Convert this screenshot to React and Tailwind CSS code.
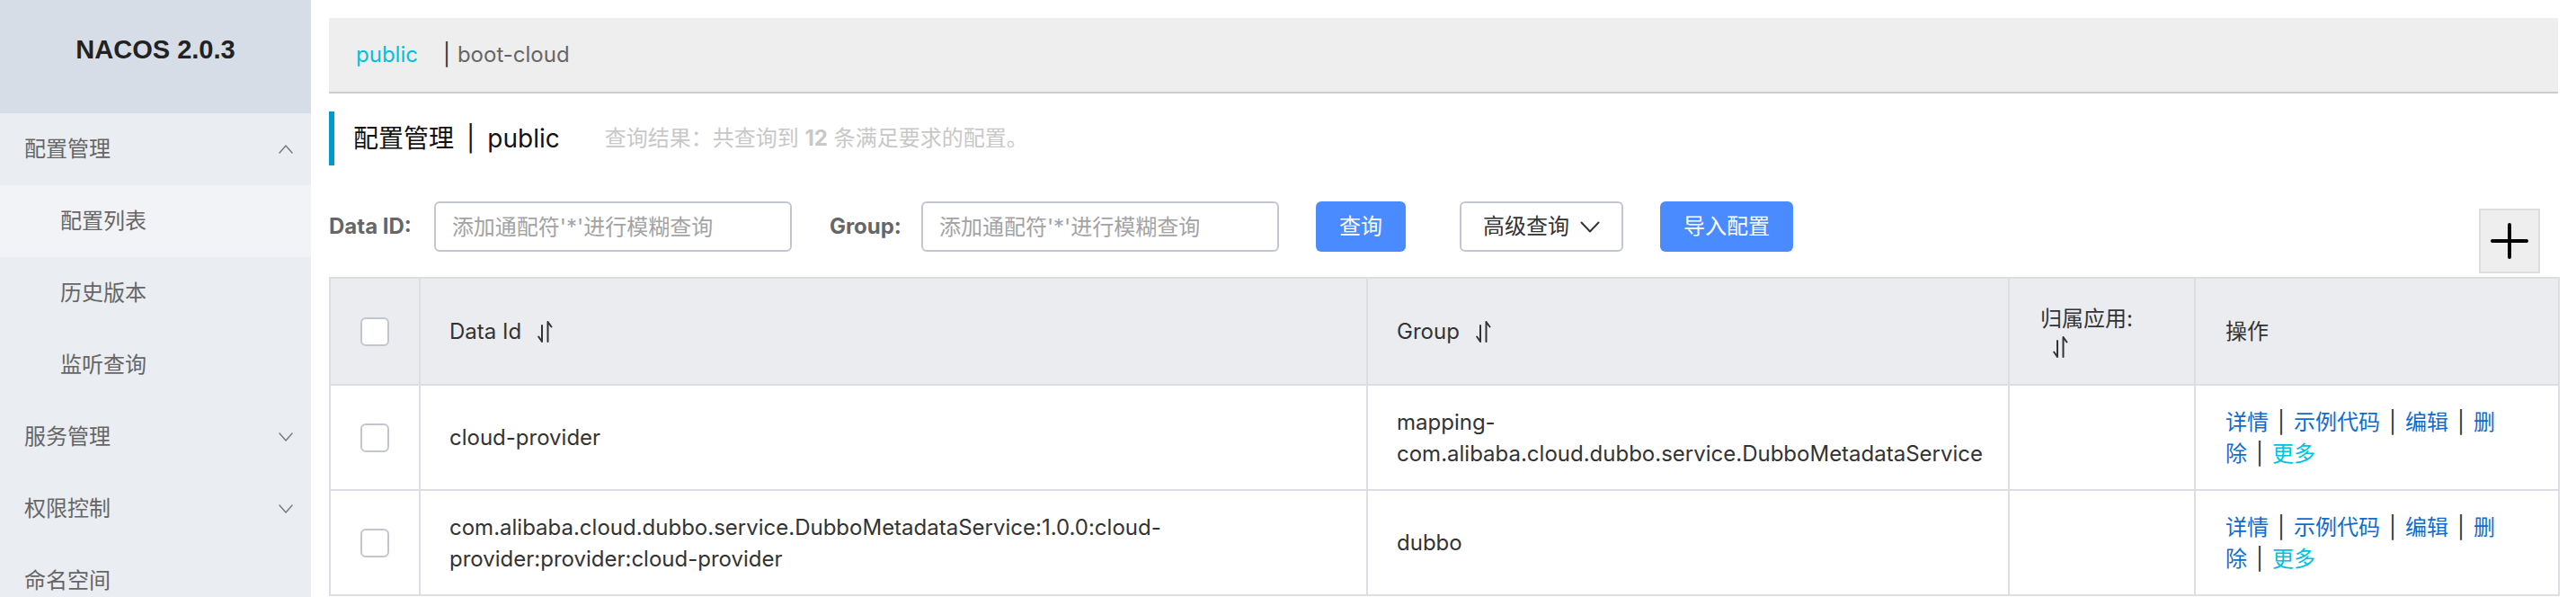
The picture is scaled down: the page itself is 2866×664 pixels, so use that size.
import React from "react";

const SortIcon = ({ className = "" }) => (
    <svg width="17" height="26" viewBox="0 0 17 26" fill="none" stroke="#333" strokeWidth="2" strokeLinecap="round" strokeLinejoin="round" className={className}>
        <path d="M5 6v18M5 24L1.2 18.5" />
        <path d="M11.5 24V2M11.5 2l4 5.5" />
    </svg>
);

const Chevron = ({ up }) => (
    <svg width="16" height="10" viewBox="0 0 16 10" fill="none" stroke="#777" strokeWidth="1.4" strokeLinecap="round" strokeLinejoin="round">
        <path d={up ? "M1 9l7-8 7 8" : "M1 1l7 8 7-8"} />
    </svg>
);

const Checkbox = () => <div className="mx-auto w-[32px] h-[32px] rounded-[6px] border-2 border-[#c4c6cf] bg-white"></div>;

const menu = [
    { label: "配置管理", chevron: "up" },
    { label: "配置列表", sub: true, active: true },
    { label: "历史版本", sub: true },
    { label: "监听查询", sub: true },
    { label: "服务管理", chevron: "down" },
    { label: "权限控制", chevron: "down" },
    { label: "命名空间" },
];

const rows = [
    {
        dataId: "cloud-provider",
        group: "mapping-com.alibaba.cloud.dubbo.service.DubboMetadataService",
    },
    {
        dataId: "com.alibaba.cloud.dubbo.service.DubboMetadataService:1.0.0:cloud-provider:provider:cloud-provider",
        group: "dubbo",
    },
];

function Ops() {
    const sep = <span className="mx-[10px] text-[#333]">|</span>;
    return (
        <div className="w-[305px] leading-[35px]">
            <a className="text-[#0f6bcf]">详情</a>
            {sep}
            <a className="text-[#0f6bcf]">示例代码</a>
            {sep}
            <a className="text-[#0f6bcf]">编辑</a>
            {sep}
            <a className="text-[#0f6bcf]">删除</a>
            {sep}
            <a className="text-[#00c1de]">更多</a>
        </div>
    );
}

export default function App() {
    return (
        <div className="flex w-[2866px] h-[664px] overflow-hidden bg-white font-['Inter','Noto_Sans_CJK_SC',sans-serif]">
            {/* sidebar */}
            <aside className="w-[346px] shrink-0 bg-[#eaedf1]">
                <div className="h-[126px] bg-[#d6dde6] flex items-center justify-center pb-[14px] font-['Liberation_Sans',sans-serif] text-[29px] font-bold text-[#222]">
                    NACOS 2.0.3
                </div>
                {menu.map((m) => (
                    <div
                        key={m.label}
                        className={`h-[80px] flex items-center justify-between pr-[20px] text-[24px] text-[#666] ${m.sub ? "pl-[67px]" : "pl-[27px]"} ${m.active ? "bg-[#f2f3f7]" : ""}`}
                    >
                        <span>{m.label}</span>
                        {m.chevron && <Chevron up={m.chevron === "up"} />}
                    </div>
                ))}
            </aside>

            {/* main */}
            <main className="flex-1 min-w-0 pt-[20px] px-[20px]">
                <div className="h-[84px] bg-[#eeeeee] border-b-2 border-[#cccccc] flex items-center pl-[30px] text-[24px]">
                    <span className="text-[#00c1de]">public</span>
                    <span className="ml-[28px] text-[#333]">|</span>
                    <span className="ml-[8px] text-[#666]">boot-cloud</span>
                </div>

                <div className="mt-[20px] h-[60px] border-l-[6px] border-[#0099cc] flex items-center pl-[21px]">
                    <span className="text-[28px] text-[#111]">配置管理</span>
                    <span className="mx-[14px] text-[28px] text-[#111]">|</span>
                    <span className="text-[28px] text-[#111]">public</span>
                    <span className="ml-[50px] text-[24px] text-[#c8c8c8]">
                        查询结果：共查询到 <b>12</b> 条满足要求的配置。
                    </span>
                </div>

                <div className="mt-[40px] h-[80px] flex items-start">
                    <label className="h-[56px] flex items-center text-[24px] font-bold text-[#666]">Data ID:</label>
                    <input
                        className="ml-[25px] w-[398px] h-[56px] rounded-[6px] border-2 border-[#c4c6cf] pl-[18px] text-[24px] outline-none placeholder:text-[#a3a3a3]"
                        placeholder="添加通配符'*'进行模糊查询"
                    />
                    <label className="ml-[42px] h-[56px] flex items-center text-[24px] font-bold text-[#666]">Group:</label>
                    <input
                        className="ml-[22px] w-[398px] h-[56px] rounded-[6px] border-2 border-[#c4c6cf] pl-[18px] text-[24px] outline-none placeholder:text-[#a3a3a3]"
                        placeholder="添加通配符'*'进行模糊查询"
                    />
                    <button className="ml-[41px] w-[100px] h-[56px] rounded-[6px] bg-[#4a8cff] text-white text-[24px]">查询</button>
                    <button className="ml-[60px] w-[182px] h-[56px] rounded-[6px] border-2 border-[#c4c6cf] bg-white text-[#333] text-[24px] flex items-center justify-center gap-[12px]">
                        <span>高级查询</span>
                        <svg width="22" height="13" viewBox="0 0 22 13" fill="none" stroke="#333" strokeWidth="2" strokeLinecap="round" strokeLinejoin="round">
                            <path d="M1.5 1.5l9.5 10 9.5-10" />
                        </svg>
                    </button>
                    <button className="ml-[41px] w-[148px] h-[56px] rounded-[6px] bg-[#4a8cff] text-white text-[24px]">导入配置</button>
                    <button className="ml-auto mr-[20px] mt-[8px] w-[68px] h-[72px] bg-[#eeeeee] border-2 border-[#dddddd] flex items-center justify-center">
                        <svg width="42" height="40" viewBox="0 0 42 40" fill="none" stroke="#000" strokeWidth="4" strokeLinecap="round">
                            <path d="M21 2v36M2 20h38" />
                        </svg>
                    </button>
                </div>

                <table className="mt-[4px] w-full table-fixed border-collapse text-[24px] text-[#333]">
                    <colgroup>
                        <col className="w-[100px]" />
                        <col className="w-[1054px]" />
                        <col className="w-[714px]" />
                        <col className="w-[207px]" />
                        <col className="w-[405px]" />
                    </colgroup>
                    <thead>
                        <tr className="h-[119px] bg-[#ebecf0]">
                            <th className="border-2 border-[#dcdee3]"><Checkbox /></th>
                            <th className="border-2 border-[#dcdee3] px-[32px] text-left font-normal">
                                <span className="inline-flex items-center">Data Id<SortIcon className="ml-[18px]" /></span>
                            </th>
                            <th className="border-2 border-[#dcdee3] px-[32px] text-left font-normal">
                                <span className="inline-flex items-center">Group<SortIcon className="ml-[18px]" /></span>
                            </th>
                            <th className="border-2 border-[#dcdee3] px-[34px] text-left font-normal leading-[33px]">
                                <div>归属应用:</div>
                                <div className="pl-[14px] pt-[2px]"><SortIcon /></div>
                            </th>
                            <th className="border-2 border-[#dcdee3] px-[33px] text-left font-normal">操作</th>
                        </tr>
                    </thead>
                    <tbody>
                        {rows.map((r, i) => (
                            <tr key={i} className="h-[117px]">
                                <td className="border-2 border-[#dcdee3]"><Checkbox /></td>
                                <td className="border-2 border-[#dcdee3] px-[32px] leading-[35px]">{r.dataId}</td>
                                <td className="border-2 border-[#dcdee3] px-[32px] leading-[35px]">{r.group}</td>
                                <td className="border-2 border-[#dcdee3]"></td>
                                <td className="border-2 border-[#dcdee3] px-[33px]"><Ops /></td>
                            </tr>
                        ))}
                    </tbody>
                </table>
            </main>
        </div>
    );
}
